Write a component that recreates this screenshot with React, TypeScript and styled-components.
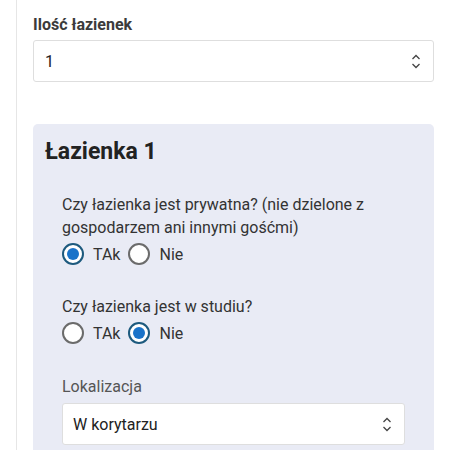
import React from 'react';
import { styled, createGlobalStyle } from 'styled-components';

const GlobalStyle = createGlobalStyle`
  body {
    margin: 0;
    background: #ffffff;
    font-family: Roboto, "Noto Sans", "Liberation Sans", sans-serif;
  }
`;

const ChevronIcon: React.FC = () => (
  <svg width="10" height="15" viewBox="0 0 10 15" fill="none">
    <path d="M1.5 5L5 1.5L8.5 5" stroke="#444" strokeWidth="1.3" />
    <path d="M1.5 10L5 13.5L8.5 10" stroke="#444" strokeWidth="1.3" />
  </svg>
);

type RadioProps = { checked?: boolean; label: string };

const Radio: React.FC<RadioProps> = ({ checked, label }) => (
  <RadioOption>
    <RadioCircle $checked={checked}>{checked && <RadioDot />}</RadioCircle>
    <RadioText>{label}</RadioText>
  </RadioOption>
);

export default function App() {
  return (
    <>
      <GlobalStyle />
      <Page>
        <FieldLabel>Ilość łazienek</FieldLabel>
        <SelectBox>
          <SelectValue>1</SelectValue>
          <ChevronIcon />
        </SelectBox>

        <Card>
          <CardTitle>Łazienka 1</CardTitle>
          <CardBody>
            <Question>
              Czy łazienka jest prywatna? (nie dzielone z gospodarzem ani innymi gośćmi)
            </Question>
            <RadioRow>
              <Radio checked label="TAk" />
              <Radio label="Nie" />
            </RadioRow>

            <Question $spaced>Czy łazienka jest w studiu?</Question>
            <RadioRow>
              <Radio label="TAk" />
              <Radio checked label="Nie" />
            </RadioRow>

            <SubLabel>Lokalizacja</SubLabel>
            <SelectBox $inner>
              <SelectValue>W korytarzu</SelectValue>
              <ChevronIcon />
            </SelectBox>
          </CardBody>
        </Card>
      </Page>
    </>
  );
}

const Page = styled.div`
  margin-left: 16px;
  border-left: 1px solid #e6e6e6;
  padding: 15px 16px 0 16px;
  min-height: 450px;
  box-sizing: border-box;
`;

const FieldLabel = styled.div`
  font-size: 16px;
  line-height: 20px;
  font-weight: 700;
  color: #3b3b3b;
  margin-bottom: 5px;
`;

const SelectBox = styled.div<{ $inner?: boolean }>`
  height: 42px;
  box-sizing: border-box;
  background: #ffffff;
  border: 1px solid #dedede;
  border-radius: 3px;
  display: flex;
  align-items: center;
  justify-content: space-between;
  padding: 0 12px 0 ${(p) => (p.$inner ? '10px' : '11px')};
`;

const SelectValue = styled.span`
  font-size: 16px;
  color: #222;
`;

const Card = styled.div`
  margin-top: 42px;
  background: #e9ebf5;
  border-radius: 5px;
  padding: 13px 0 20px 12px;
`;

const CardTitle = styled.div`
  font-size: 23px;
  line-height: 30px;
  font-weight: 700;
  color: #222;
`;

const CardBody = styled.div`
  padding: 26px 29px 0 17px;
`;

const Question = styled.div<{ $spaced?: boolean }>`
  font-size: 16px;
  line-height: 23px;
  color: #333;
  margin-top: ${(p) => (p.$spaced ? '28px' : '0')};
`;

const RadioRow = styled.div`
  display: flex;
  align-items: center;
  gap: 8px;
  height: 26px;
  margin-top: 2px;
`;

const RadioOption = styled.label`
  display: flex;
  align-items: center;
  gap: 9px;
`;

const RadioCircle = styled.span<{ $checked?: boolean }>`
  width: 22px;
  height: 22px;
  box-sizing: border-box;
  border-radius: 50%;
  background: #ffffff;
  border: 2px solid ${(p) => (p.$checked ? '#1d5a7e' : '#6b6b6b')};
  display: flex;
  align-items: center;
  justify-content: center;
`;

const RadioDot = styled.span`
  width: 12px;
  height: 12px;
  border-radius: 50%;
  background: #1a73c9;
`;

const RadioText = styled.span`
  font-size: 16px;
  color: #333;
`;

const SubLabel = styled.div`
  font-size: 16px;
  line-height: 23px;
  color: #555;
  margin: 29px 0 5px;
`;
